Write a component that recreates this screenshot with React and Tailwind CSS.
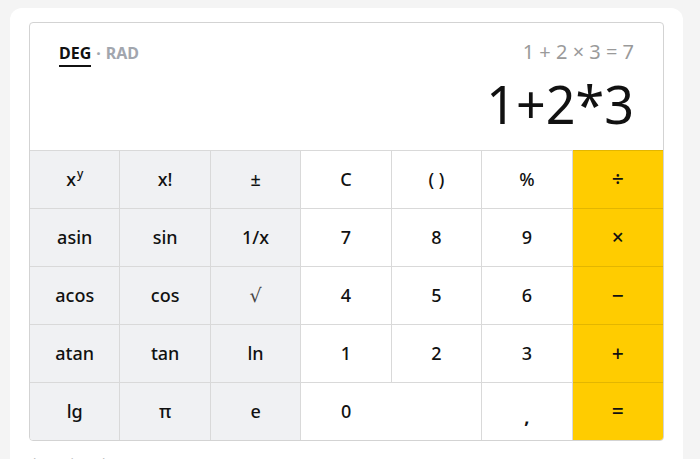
import React from 'react';

const Op = ({ children }) => <span className="text-[21px] font-medium">{children}</span>;

const rows = [
  [
    { label: <span>x<span className="text-[12px] relative -top-[8px] ml-[1px]">y</span></span>, kind: 'fn' },
    { label: 'x!', kind: 'fn' },
    { label: '±', kind: 'fn' },
    { label: 'C', kind: 'num' },
    { label: '( )', kind: 'num' },
    { label: '%', kind: 'num' },
    { label: <Op>÷</Op>, kind: 'op' },
  ],
  [
    { label: 'asin', kind: 'fn' },
    { label: 'sin', kind: 'fn' },
    { label: '1/x', kind: 'fn' },
    { label: '7', kind: 'num' },
    { label: '8', kind: 'num' },
    { label: '9', kind: 'num' },
    { label: <Op>×</Op>, kind: 'op' },
  ],
  [
    { label: 'acos', kind: 'fn' },
    { label: 'cos', kind: 'fn' },
    { label: <span className="font-['DejaVu_Serif',serif] font-normal text-[19px] text-[#444]">√</span>, kind: 'fn' },
    { label: '4', kind: 'num' },
    { label: '5', kind: 'num' },
    { label: '6', kind: 'num' },
    { label: <Op>−</Op>, kind: 'op' },
  ],
  [
    { label: 'atan', kind: 'fn' },
    { label: 'tan', kind: 'fn' },
    { label: 'ln', kind: 'fn' },
    { label: '1', kind: 'num' },
    { label: '2', kind: 'num' },
    { label: '3', kind: 'num' },
    { label: <Op>+</Op>, kind: 'op' },
  ],
];

const bg = {
  fn: 'bg-[#f0f1f3] border-[#d9d9d9]',
  num: 'bg-white border-[#d9d9d9]',
  op: 'bg-[#ffcc00] border-[#e3b600]',
};

const Key = ({ children, kind, last }) => (
  <div
    className={`h-[58px] flex items-center justify-center border-t text-[18px] font-medium text-[#111] ${bg[kind]} ${last ? '' : 'border-r'}`}
  >
    {children}
  </div>
);

export default function App() {
  return (
    <div className="w-[700px] h-[459px] bg-[#f4f4f4] overflow-hidden pt-[8px] pl-[10px] font-['Noto_Sans',sans-serif]">
      <div className="w-[673px] h-[480px] bg-white rounded-[12px] pt-[14px] pl-[19px]">
        <div className="w-[635px] border border-[#d3d3d3] rounded-[4px] overflow-hidden">
          <div className="h-[127px] px-[29px] pt-[14px] flex flex-col">
            <div className="flex items-center justify-between">
              <div className="flex items-center text-[16px] font-bold">
                <span className="text-[#111] border-b-2 border-[#111] leading-[24px]">DEG</span>
                <span className="text-[#a2a6ae] mx-[5px] mb-[2px]">·</span>
                <span className="text-[#a2a6ae] mb-[2px]">RAD</span>
              </div>
              <div className="text-[20px] text-[#9a9a9a] mb-[3px]">1 + 2 × 3 = 7</div>
            </div>
            <div className="text-right text-[52px] leading-none text-[#111] mt-[8px]">1+2*3</div>
          </div>
          <div className="grid grid-cols-7">
            {rows.map((row, r) =>
              row.map((k, i) => (
                <Key key={`${r}-${i}`} kind={k.kind} last={i === 6}>
                  {k.label}
                </Key>
              ))
            )}
            <Key kind="fn">lg</Key>
            <Key kind="fn">π</Key>
            <Key kind="fn">e</Key>
            <div className="col-span-2 h-[58px] flex items-center border-t border-r border-[#d9d9d9] bg-white text-[18px] font-medium text-[#111]">
              <span className="w-1/2 text-center">0</span>
            </div>
            <Key kind="num"><span className="relative top-[6px] font-bold">,</span></Key>
            <Key kind="op" last><Op>=</Op></Key>
          </div>
        </div>
        <div className="mt-[14px] pl-[4px] text-[13px] leading-[16px] text-[#bbb] flex gap-[20px]">
          <span>lg</span><span>sin</span><span>lg</span><span>tan</span>
        </div>
      </div>
    </div>
  );
}
